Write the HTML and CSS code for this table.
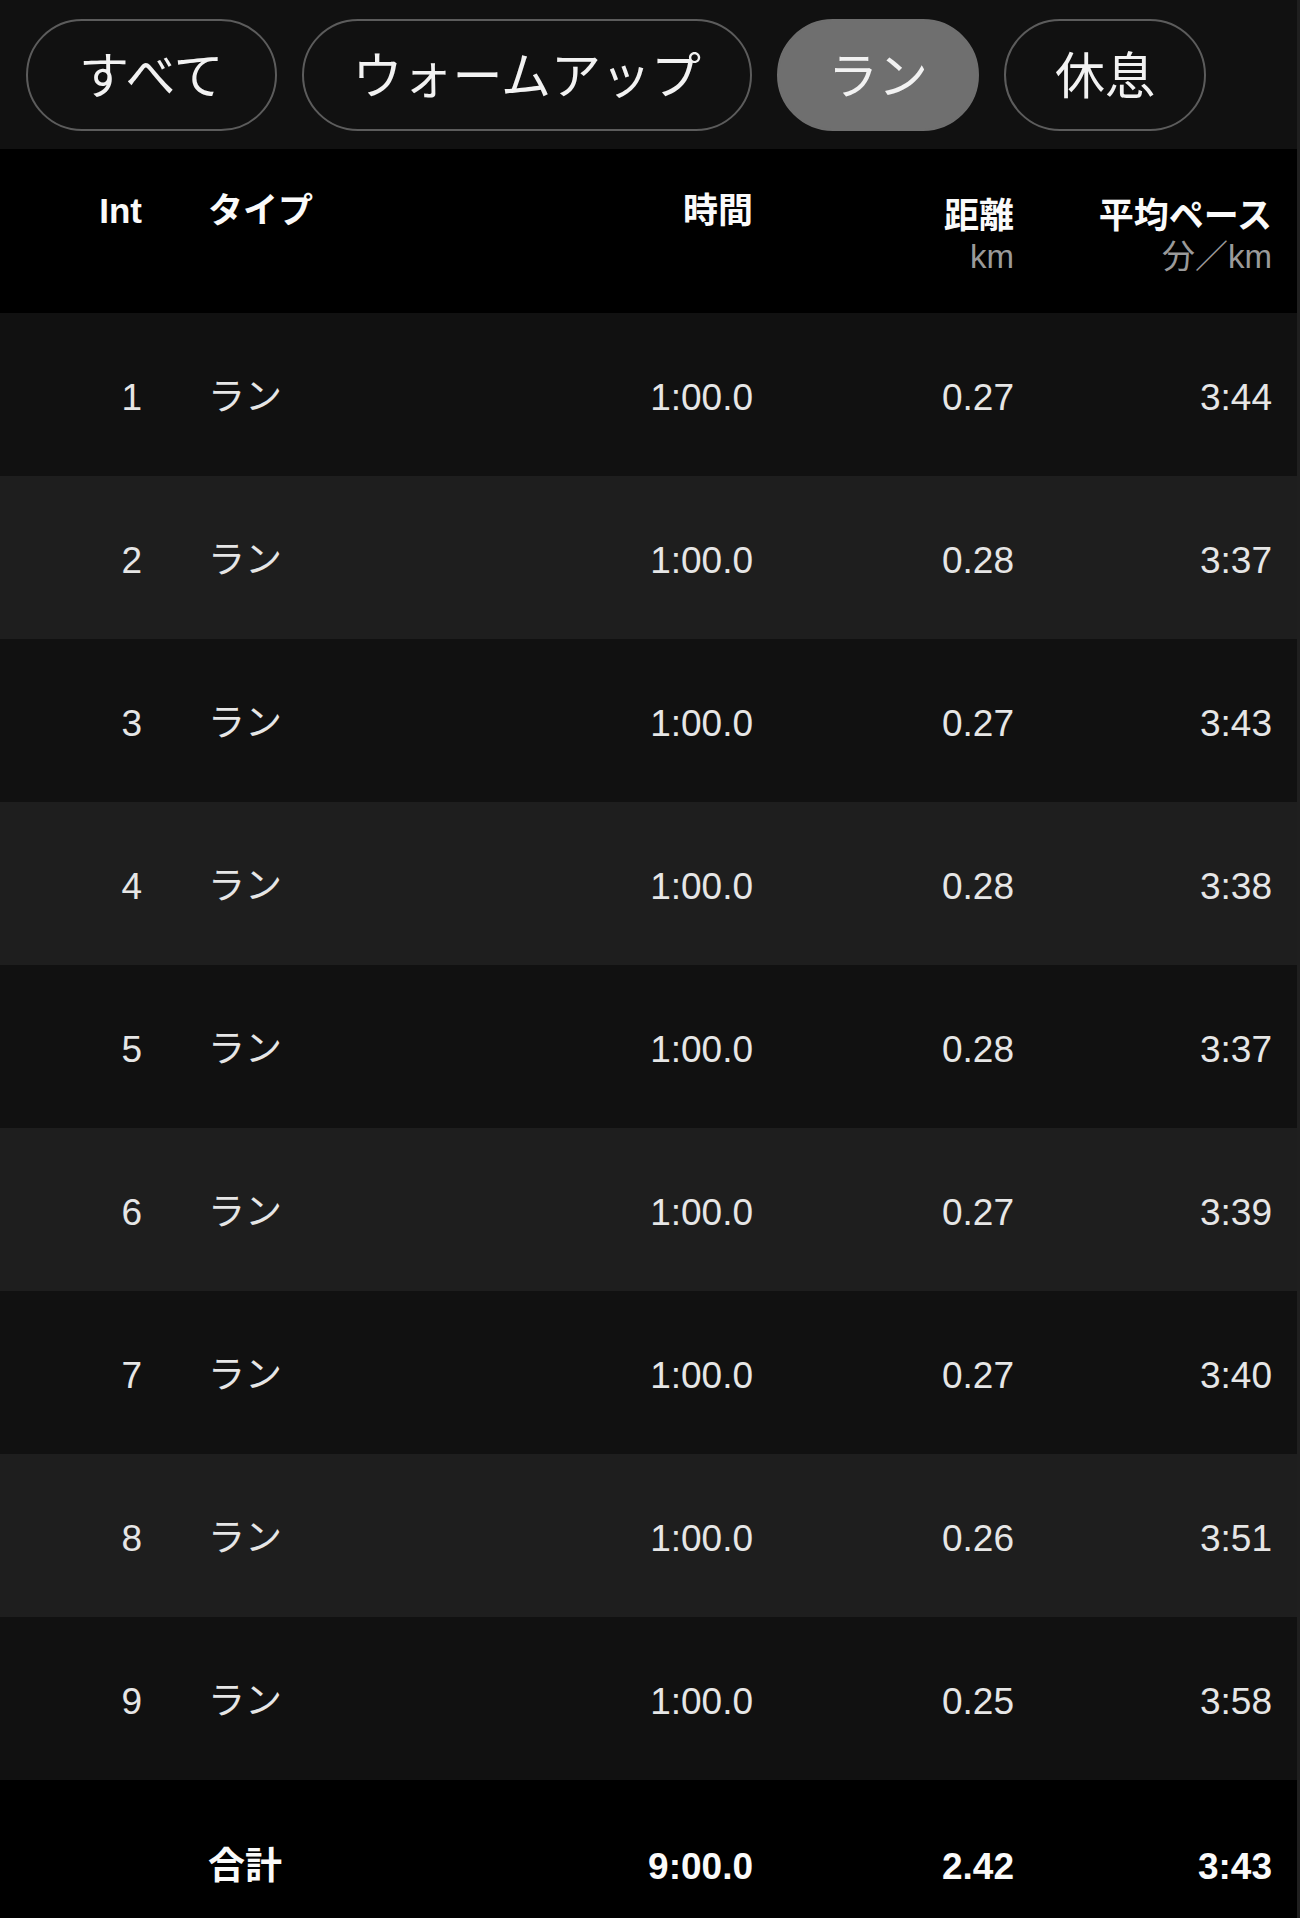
FILE: index.html
```html
<!DOCTYPE html>
<html lang="ja">
<head>
<meta charset="utf-8">
<title>インターバル</title>
<link rel="stylesheet" href="styles.css">
</head>
<body>
<div class="page">
  <nav class="filters">
    <span class="pill">すべて</span>
    <span class="pill">ウォームアップ</span>
    <span class="pill active">ラン</span>
    <span class="pill">休息</span>
  </nav>
  <div class="table">
    <div class="row head">
      <div class="c-int"><span class="lbl">Int</span></div>
      <div class="c-type"><span class="lbl">タイプ</span></div>
      <div class="c-num"><span class="lbl">時間</span></div>
      <div class="c-num two"><span class="lbl">距離</span><span class="sub">km</span></div>
      <div class="c-num two"><span class="lbl">平均ペース</span><span class="sub">分／km</span></div>
    </div>
    <div class="row odd"><div class="c-int">1</div><div class="c-type">ラン</div><div class="c-num">1:00.0</div><div class="c-num">0.27</div><div class="c-num">3:44</div></div>
    <div class="row even"><div class="c-int">2</div><div class="c-type">ラン</div><div class="c-num">1:00.0</div><div class="c-num">0.28</div><div class="c-num">3:37</div></div>
    <div class="row odd"><div class="c-int">3</div><div class="c-type">ラン</div><div class="c-num">1:00.0</div><div class="c-num">0.27</div><div class="c-num">3:43</div></div>
    <div class="row even"><div class="c-int">4</div><div class="c-type">ラン</div><div class="c-num">1:00.0</div><div class="c-num">0.28</div><div class="c-num">3:38</div></div>
    <div class="row odd"><div class="c-int">5</div><div class="c-type">ラン</div><div class="c-num">1:00.0</div><div class="c-num">0.28</div><div class="c-num">3:37</div></div>
    <div class="row even"><div class="c-int">6</div><div class="c-type">ラン</div><div class="c-num">1:00.0</div><div class="c-num">0.27</div><div class="c-num">3:39</div></div>
    <div class="row odd"><div class="c-int">7</div><div class="c-type">ラン</div><div class="c-num">1:00.0</div><div class="c-num">0.27</div><div class="c-num">3:40</div></div>
    <div class="row even"><div class="c-int">8</div><div class="c-type">ラン</div><div class="c-num">1:00.0</div><div class="c-num">0.26</div><div class="c-num">3:51</div></div>
    <div class="row odd"><div class="c-int">9</div><div class="c-type">ラン</div><div class="c-num">1:00.0</div><div class="c-num">0.25</div><div class="c-num">3:58</div></div>
    <div class="row total"><div class="c-int"></div><div class="c-type">合計</div><div class="c-num">9:00.0</div><div class="c-num">2.42</div><div class="c-num">3:43</div></div>
  </div>
</div>
</body>
</html>
```
FILE: styles.css
```css
html, body {
  margin: 0;
  padding: 0;
  background: #000;
  overflow: hidden;
}
body {
  font-family: "Liberation Sans", "Noto Sans CJK JP", sans-serif;
  color: #e6e6e6;
}
.page {
  width: 1300px;
  box-sizing: border-box;
  border-right: 3px solid #1f1f1f;
}
.filters {
  height: 149px;
  background: #111111;
  display: flex;
  align-items: center;
  gap: 25px;
  padding-left: 26px;
  box-sizing: border-box;
}
.pill {
  height: 112px;
  box-sizing: border-box;
  border: 2px solid #5c5c5c;
  border-radius: 56px;
  padding: 0 49px 5px;
  display: flex;
  align-items: center;
  font-family: "Noto Sans CJK JP", sans-serif;
  font-size: 50px;
  line-height: 1;
  color: #f2f2f2;
  white-space: nowrap;
}
.pill:first-child {
  padding-left: 51px;
  padding-right: 51px;
}
.pill.active {
  background: #6f6f6f;
  border-color: #6f6f6f;
}
.table {
  display: flex;
  flex-direction: column;
}
.row {
  display: grid;
  grid-template-columns: 142px 411px 200px 261px 258px;
  align-items: center;
  height: 163px;
  box-sizing: border-box;
  padding-top: 6px;
  font-size: 37px;
  line-height: 44px;
  padding-right: 25px;
}
.row.odd { background: #111111; }
.row.even { background: #1e1e1e; }
.row.head {
  height: 164px;
  background: #000;
  align-items: start;
  padding-top: 42px;
  font-weight: bold;
  color: #fafafa;
}
.row.total {
  height: 168px;
  background: #000;
  font-weight: bold;
  color: #fafafa;
}
.c-int { text-align: right; }
.c-type { padding-left: 66px; }
.c-num { text-align: right; }
.head .lbl {
  display: block;
  font-size: 35px;
  line-height: 40px;
}
.head .two { padding-top: 5px; }
.head .sub {
  display: block;
  font-size: 33px;
  line-height: 42px;
  font-weight: normal;
  color: #9a9a9a;
}
```
